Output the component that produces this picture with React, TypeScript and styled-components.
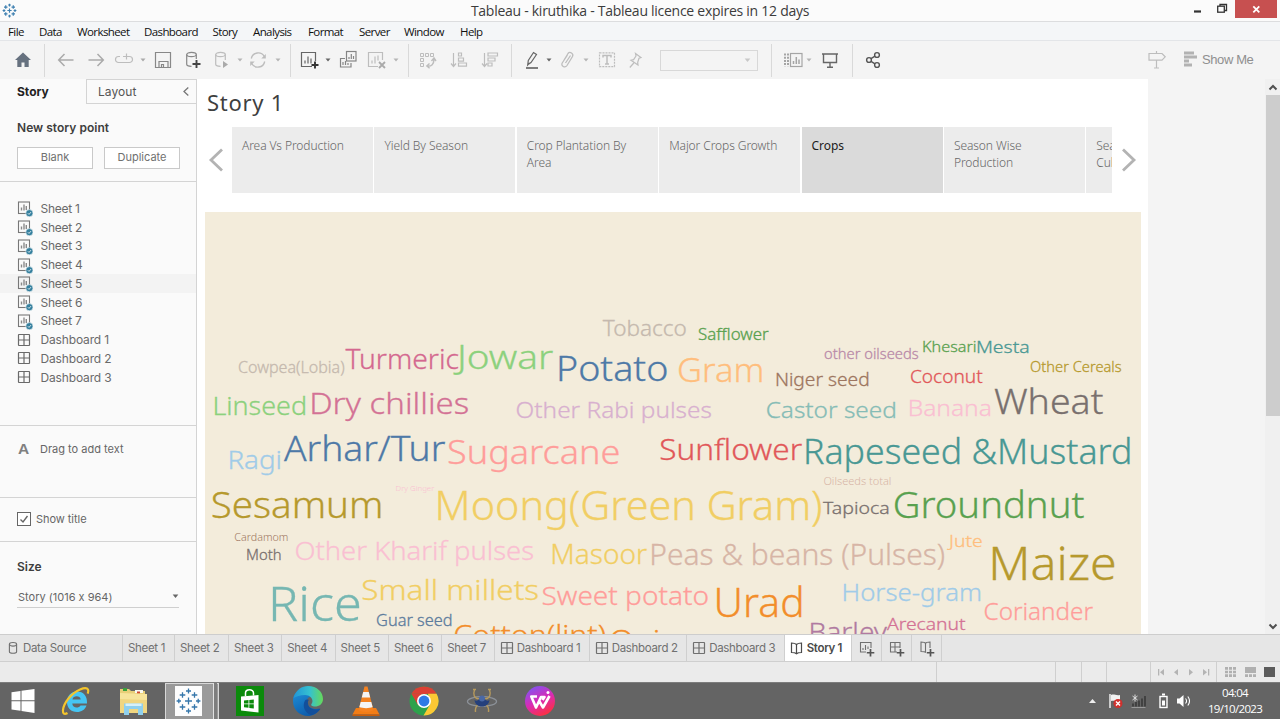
import React from "react";
import styled, { createGlobalStyle } from "styled-components";

const Global = createGlobalStyle`
  * { box-sizing: border-box; }
  html, body { margin: 0; padding: 0; overflow: hidden; }
  body { font-family: Inter, "Liberation Sans", sans-serif; font-feature-settings: "calt" 0; color: #555; }
  svg { display: block; flex: none; }
`;

const segoe = `"Open Sans", "Noto Sans", sans-serif`;
const book = `"Noto Sans", "Open Sans", sans-serif`;

const Window = styled.div`
  width: 1280px;
  height: 719px;
  display: flex;
  flex-direction: column;
  overflow: hidden;
  background: #fff;
`;

/* ---------- title bar and menus ---------- */
const TitleBar = styled.header`
  height: 22px;
  flex: none;
  display: grid;
  grid-template-columns: 95px 1fr 95px;
  background: #fbfbfb;
  border-bottom: 1px solid #dcdddf;
`;
const AppIcon = styled.div`
  padding: 3px 0 0 2px;
`;
const Title = styled.div`
  text-align: center;
  font: 14px/21px ${segoe};
  letter-spacing: -0.27px;
  color: #3c3c3c;
`;
const WindowButtons = styled.div`
  display: flex;
  align-items: flex-start;
`;
const Close = styled.div`
  width: 42px;
  height: 18px;
  margin-left: 5px;
  background: #c75050;
  display: flex;
  align-items: center;
  justify-content: center;
`;
const MenuBar = styled.nav`
  height: 19px;
  flex: none;
  display: flex;
  padding-left: 8px;
  background: #f4f6f8;
  border-bottom: 1px solid #e3e5e8;
`;
const MenuItem = styled.span<{ $w: number }>`
  width: ${(p) => p.$w}px;
  flex: none;
  font: 11.5px/19px ${segoe};
  letter-spacing: -0.6px;
  color: #101010;
  white-space: nowrap;
`;

/* ---------- toolbar ---------- */
const Toolbar = styled.div`
  height: 38px;
  flex: none;
  display: flex;
  align-items: center;
  background: #f4f4f4;
`;
const Tool = styled.div<{ $gap: number; $tone?: string }>`
  margin-left: ${(p) => p.$gap}px;
  flex: none;
  color: ${(p) => p.$tone ?? "#bdbdbd"};
`;
const Divider = styled.div<{ $gap: number }>`
  margin-left: ${(p) => p.$gap}px;
  width: 1px;
  height: 33px;
  background: #d9d9d9;
  flex: none;
`;
const Combo = styled.div`
  width: 98px;
  height: 21px;
  margin: 0 -1px 0 15px;
  padding-right: 6px;
  border: 1px solid #d8d8d8;
  display: flex;
  align-items: center;
  justify-content: flex-end;
  color: #c8c8c8;
`;
const ShowMe = styled.div`
  display: flex;
  align-items: center;
  gap: 4px;
  margin-left: 16px;
  padding-bottom: 2px;
  font: 13px "Liberation Sans", sans-serif;
  letter-spacing: -0.4px;
  color: #8f8f8f;
  white-space: nowrap;
`;

/* ---------- side panel ---------- */
const Body = styled.div`
  height: 555px;
  flex: none;
  display: flex;
`;
const Side = styled.aside`
  width: 197px;
  flex: none;
  border-right: 1px solid #d4d4d4;
  background: #fafafa;
  display: flex;
  flex-direction: column;
`;
const SideTabs = styled.div`
  height: 25px;
  display: flex;
`;
const ActiveTab = styled.div`
  width: 86px;
  padding-left: 17px;
  font-size: 12px;
  line-height: 25px;
  font-weight: 700;
  color: #222;
`;
const IdleTab = styled.div`
  flex: 1;
  display: flex;
  justify-content: space-between;
  align-items: center;
  padding: 0 7px 1px 11px;
  font-size: 12px;
  letter-spacing: 0.05px;
  color: #555;
  border: solid #d4d4d4;
  border-width: 1px 0 1px 1px;
`;
const Section = styled.section<{ $h: number; $pad?: string }>`
  height: ${(p) => p.$h}px;
  flex: none;
  padding: ${(p) => p.$pad ?? "0"};
  border-bottom: 1px solid #d4d4d4;
  &:last-child { border-bottom: 0; }
`;
const Heading = styled.h2`
  margin: 0;
  font-size: 12px;
  line-height: 16px;
  font-weight: 600;
  letter-spacing: 0.03px;
  color: #3e3e3e;
`;
const ButtonRow = styled.div`
  display: flex;
  gap: 11px;
  margin-top: 11px;
`;
const SideButton = styled.button`
  width: 76px;
  height: 22px;
  padding: 0 0 2px;
  border: 1px solid #c9c9c9;
  background: #fff;
  font: 11px Inter, sans-serif;
  color: #707070;
`;
const SheetRow = styled.div<{ $hover?: boolean; $ls?: number }>`
  height: 18.75px;
  display: flex;
  align-items: center;
  gap: 7.5px;
  padding-left: 17px;
  font-size: 12px;
  letter-spacing: ${(p) => p.$ls ?? -0.28}px;
  color: #6a6a6a;
  background: ${(p) => (p.$hover ? "#f3f3f3" : "transparent")};
`;
const RowIcon = styled.span`
  width: 16px;
  flex: none;
`;
const DragRow = styled.div`
  display: flex;
  align-items: center;
  font-size: 11px;
  color: #666;
`;
const LetterA = styled.span`
  width: 23px;
  padding-left: 1px;
  font: 700 15.5px "Liberation Sans", sans-serif;
  color: #808080;
`;
const CheckRow = styled.div`
  display: flex;
  align-items: center;
  gap: 5px;
  font-size: 11px;
  letter-spacing: -0.05px;
  color: #666;
`;
const SizePicker = styled.div`
  width: 162px;
  height: 22px;
  margin-top: 11px;
  padding: 0 0 0 1px;
  display: flex;
  justify-content: space-between;
  align-items: center;
  border-bottom: 1px solid #cfcfcf;
  font-size: 11px;
  color: #666;
`;

/* ---------- story ---------- */
const Story = styled.main`
  width: 951px;
  flex: none;
  background: #fff;
  padding: 10px 0 0 8px;
`;
const StoryTitle = styled.h1`
  margin: 0 0 0 2px;
  height: 28px;
  font: 400 22px/26px ${book};
  letter-spacing: 0.72px;
  color: #3f3f3f;
`;
const Navigator = styled.div`
  display: flex;
  align-items: center;
  height: 66px;
  margin: 10px 0 19px;
`;
const NavArrow = styled.div<{ $w: number; $left: number }>`
  width: ${(p) => p.$w}px;
  padding-left: ${(p) => p.$left}px;
  flex: none;
`;
const Points = styled.div`
  width: 880px;
  height: 66px;
  display: flex;
  gap: 1.4px;
  overflow: hidden;
`;
const Point = styled.div<{ $active?: boolean }>`
  width: 141px;
  flex: none;
  padding: 10px 10px 0;
  font: ${(p) => (p.$active ? 400 : 300)} 12px/17px ${book};
  letter-spacing: -0.08px;
  color: ${(p) => (p.$active ? "#1c1c1c" : "#666")};
  background: ${(p) => (p.$active ? "#dadada" : "#ececec")};
`;
const Viz = styled.div`
  width: 936px;
  height: 422px;
  background: #f3ecdb;
`;
const Gutter = styled.div`
  flex: 1;
  background: #f4f4f4;
`;
const ScrollBar = styled.div`
  width: 15px;
  flex: none;
  background: #f0f0f0;
  display: flex;
  flex-direction: column;
  align-items: center;
  justify-content: space-between;
  color: #505050;
`;
const Thumb = styled.div`
  width: 14px;
  height: 321px;
  background: #cdcdcd;
`;
const ThumbArea = styled.div`
  flex: 1;
`;
const ScrollEnd = styled.div`
  height: 16px;
  display: flex;
  align-items: center;
`;

/* ---------- sheet tabs and status ---------- */
const SheetTabs = styled.div`
  height: 28px;
  flex: none;
  display: flex;
  background: #e6e6e6;
  border-top: 1px solid #cdcdcd;
  border-bottom: 1px solid #cfcfcf;
`;
const SheetTab = styled.div<{ $w: number; $active?: boolean; $pad?: number; $gap?: number }>`
  width: ${(p) => p.$w}px;
  flex: none;
  display: flex;
  align-items: center;
  gap: ${(p) => p.$gap ?? 3}px;
  padding: 0 0 ${(p) => (p.$active ? 1 : 0)}px ${(p) => p.$pad ?? 5}px;
  border-right: 1px solid #cfcfcf;
  font-size: 11.5px;
  font-weight: ${(p) => (p.$active ? 600 : 400)};
  letter-spacing: -0.32px;
  white-space: nowrap;
  color: ${(p) => (p.$active ? "#4a4a4a" : "#707070")};
  background: ${(p) => (p.$active ? "#fff" : "transparent")};
`;
const Status = styled.div`
  height: 20px;
  flex: none;
  display: flex;
  background: #ebebeb;
`;
const StatusCell = styled.div<{ $w: number }>`
  width: ${(p) => p.$w}px;
  flex: none;
  display: flex;
  align-items: center;
  border-right: 1px solid #cfcfcf;
  &:last-child { border: 0; }
`;

/* ---------- taskbar ---------- */
const TaskBar = styled.footer`
  height: 37px;
  flex: none;
  display: flex;
  align-items: center;
  background: #646464;
  border-top: 1px solid #7c7c7c;
`;
const Task = styled.div<{ $w: number }>`
  width: ${(p) => p.$w}px;
  height: 36px;
  flex: none;
  display: flex;
  align-items: center;
  justify-content: center;
`;
const OpenTask = styled.div`
  width: 54px;
  height: 37px;
  flex: none;
  display: flex;
  align-items: center;
  background: #9a9a9a;
  border: 1px solid #d8d8d8;
  padding-left: 9px;
  gap: 11px;
`;
const StackEdge = styled.div`
  width: 4px;
  height: 36px;
  border: solid #e2e2e2;
  border-width: 0 0 0 1px;
  background: #7e7e7e;
`;
const Tray = styled.div`
  margin-left: auto;
  display: flex;
  align-items: center;
`;
const Clock = styled.div`
  width: 90px;
  text-align: center;
  font: 11.5px/16px ${segoe};
  letter-spacing: -0.68px;
  color: #fff;
`;

/* ---------- icons ---------- */
type IconProps = { children: React.ReactNode; w?: number; h?: number; sw?: number };
const Icon = ({ children, w = 20, h = 20, sw = 1.2 }: IconProps) => (
  <svg width={w} height={h} viewBox={`0 0 ${w} ${h}`} fill="none" stroke="currentColor" strokeWidth={sw}>
    {children}
  </svg>
);
const Caret = ({ s = 6 }: { s?: number }) => (
  <svg width={s} height={s / 2 + 1} viewBox="0 0 6 4"><path d="M0.5 0.5h5L3 3.5z" fill="currentColor" /></svg>
);
const GridIcon = () => (
  <Icon w={14} h={14}><rect x="1.5" y="1.5" width="11" height="11" rx="0.5" /><path d="M7 1.5v11M1.5 7h11" /></Icon>
);
const SheetIcon = () => (
  <svg width="16" height="18" viewBox="0 0 16 18" fill="none" stroke="#777">
    <rect x="1.5" y="3" width="11" height="11.5" strokeWidth="1.1" />
    <path d="M4.5 11.5V8.500M7 11.500V5.500M9.300 11V7" strokeWidth="1.400" stroke="#8a8a8a" />
    <circle cx="12.400" cy="14.200" r="3.600" fill="#35809e" stroke="#fafafa" strokeWidth="0.600" />
    <path d="M10.800 14.200l1.200 1.200 2-2.300" stroke="#e6f1f5" strokeWidth="0.900" />
  </svg>
);
const Cylinder = () => (
  <Icon w={10} h={14} sw={1.1}><ellipse cx="5" cy="3.300" rx="3.600" ry="1.800" /><path d="M1.400 3.300v7.400c0 2 7.200 2 7.200 0V3.300" /></Icon>
);
const BookIcon = () => (
  <Icon w={13} h={14}><path d="M6.500 3.500C5 2 3.500 2 1.500 2v9.500c2 0 3.500 0 5 1.300 1.500-1.300 3-1.300 5-1.300V2c-2 0-3.500 0-5 1.500v9" /></Icon>
);
const Plus = () => <path d="M12.500 9v7.500M8.800 12.750h7.500" strokeWidth="1.700" stroke="#555" />;
const crosses: [number, number, number][] = [
  [12, 12, 3.4], [12, 3.2, 2.2], [12, 20.8, 2.2], [3.2, 12, 2.2], [20.8, 12, 2.2],
  [6, 6.5, 2.8], [18, 6.5, 2.8], [6, 17.5, 2.8], [18, 17.5, 2.8],
];
const TableauMark = ({ size, sw = 1.4 }: { size: number; sw?: number }) => (
  <svg width={size} height={size} viewBox="0 0 24 24" stroke="#3d7fb0" strokeWidth={sw}>
    {crosses.map(([x, y, r]) => (
      <path key={`${x}-${y}`} d={`M${x - r} ${y}h${2 * r}M${x} ${y - r}v${2 * r}`} />
    ))}
  </svg>
);

/* ---------- word cloud: text, left, right, baseline, size, colour ---------- */
type Word = [string, number, number, number, number, string];
const words: Word[] = [
  ["Tobacco", 604, 686, 336.3, 21, "#c5b9ae"],
  ["Safflower", 699, 768, 340.3, 15.5, "#59a14f"],
  ["Turmeric", 347, 458, 369.3, 26.6, "#d4688f"],
  ["Jowar", 459, 552, 369.3, 33, "#8cd17d"],
  ["Cowpea(Lobia)", 239, 344, 373, 15.5, "#c5b9ae"],
  ["Potato", 558, 667, 381, 34, "#4e79a7"],
  ["Gram", 679, 763, 381.7, 33, "#ffbe7d"],
  ["other oilseeds", 825, 918, 359, 15, "#b98aa8"],
  ["Khesari", 923, 976, 352.3, 15, "#59a14f"],
  ["Mesta", 977, 1029, 353, 17.3, "#499894"],
  ["Other Cereals", 1031, 1121, 372.3, 14.8, "#b6992d"],
  ["Niger seed", 776, 869, 386, 18, "#9d7660"],
  ["Coconut", 911, 982, 383, 17.7, "#e15759"],
  ["Castor seed", 767, 896, 417.7, 22.5, "#86bcb6"],
  ["Banana", 909, 991, 416.3, 22.5, "#fabfd2"],
  ["Wheat", 996, 1102, 414, 34, "#79706e"],
  ["Linseed", 214, 306, 415, 26, "#8cd17d"],
  ["Dry chillies", 311, 468, 414, 29.5, "#d37295"],
  ["Other Rabi pulses", 517, 711, 418.3, 22.8, "#d8b0cf"],
  ["Ragi", 229, 281, 468.7, 25.5, "#a0cbe8"],
  ["Arhar/Tur", 286, 444, 460.7, 34, "#4e79a7"],
  ["Sugarcane", 449, 619, 464, 32.5, "#ff9d9a"],
  ["Sunflower", 661, 801, 460, 28.5, "#e15759"],
  ["Rapeseed &Mustard", 805, 1131, 464, 34, "#499894"],
  ["Sesamum", 213, 382, 518.3, 36.5, "#b6992d"],
  ["Dry Ginger", 396, 434, 490.7, 7.5, "#fabfd2"],
  ["Moong(Green Gram)", 437, 821, 519.7, 40, "#f1ce63"],
  ["Oilseeds total", 824, 891, 485, 10, "#d7b5a6"],
  ["Tapioca", 824, 889, 514, 17, "#79706e"],
  ["Groundnut", 895, 1083, 518, 36.5, "#59a14f"],
  ["Cardamom", 235, 288, 541.3, 10.5, "#9d7660"],
  ["Moth", 247, 281, 560, 15, "#79706e"],
  ["Other Kharif pulses", 296, 533, 560, 25.8, "#fabfd2"],
  ["Masoor", 552, 646, 564, 27.5, "#f1ce63"],
  ["Peas & beans (Pulses)", 651, 944, 564.7, 28.5, "#d7b5a6"],
  ["Jute", 950, 982, 547.3, 15.5, "#ffbe7d"],
  ["Maize", 991, 1115, 580.3, 45.5, "#b6992d"],
  ["Rice", 271, 360, 621.3, 48, "#76b7b2"],
  ["Small millets", 363, 538, 599.7, 27, "#f1ce63"],
  ["Sweet potato", 543, 708, 605, 25.5, "#ff9d9a"],
  ["Urad", 716, 803, 617.3, 39.5, "#f28e2b"],
  ["Horse-gram", 843, 981, 601, 24.3, "#a0cbe8"],
  ["Coriander", 985, 1092, 620, 23.8, "#ff9d9a"],
  ["Guar seed", 377, 452, 626.3, 15.7, "#5d7c9d"],
  ["Cotton(lint)", 455, 605, 645, 27, "#f28e2b"],
  ["Onion", 611, 697, 651, 30, "#f28e2b"],
  ["Barley", 810, 886, 640.5, 25.5, "#b07aa1"],
  ["Arecanut", 888, 965, 630, 17, "#d37295"],
];
const WordCloud = () => (
  <svg width="936" height="422" viewBox="205 212 936 422" fontFamily={book} fontWeight={300}>
    {words.map(([t, x1, x2, y, size, c]) => (
      <text
        key={t}
        x={x1 - size * 0.06}
        y={y}
        fontSize={size}
        fill={c}
        stroke={c}
        strokeWidth={size > 12 ? 0.3 : 0}
        textLength={x2 - x1 + size * 0.1}
        lengthAdjust="spacingAndGlyphs"
      >
        {t}
      </text>
    ))}
  </svg>
);

const menus: [string, number][] = [
  ["File", 31], ["Data", 38], ["Worksheet", 67], ["Dashboard", 68.5], ["Story", 40.5], ["Analysis", 55],
  ["Format", 51], ["Server", 45], ["Window", 56], ["Help", 30],
];
const dark = "#666";

export default function App() {
  return (
    <Window>
      <Global />
      <TitleBar>
        <AppIcon><TableauMark size={15} sw={1.9} /></AppIcon>
        <Title>Tableau - kiruthika - Tableau licence expires in 12 days</Title>
        <WindowButtons>
          <svg width="45" height="20" viewBox="0 0 45 20" fill="none" stroke="#333" strokeWidth="1.3">
            <path d="M9 11.500h7" strokeWidth="2.200" />
            <rect x="32.700" y="6.200" width="6.600" height="6" /><path d="M35 6V4.500h6.500v6h-2" />
          </svg>
          <Close>
            <svg width="9" height="9" viewBox="0 0 9 9" stroke="#fff" strokeWidth="1.800"><path d="M1.300 1.300l6 6M7.300 1.300l-6 6" /></svg>
          </Close>
        </WindowButtons>
      </TitleBar>
      <MenuBar>{menus.map(([m, w]) => <MenuItem key={m} $w={w}>{m}</MenuItem>)}</MenuBar>

      <Toolbar>
        <Tool $gap={13} $tone="#66717f"><Icon><path d="M10 2.500l8 7.500h-2.300v7h-4.200v-4.500h-3V17H4.300v-7H2z" fill="currentColor" stroke="none" /></Icon></Tool>
        <Divider $gap={11} />
        <Tool $gap={11} $tone="#aaa"><Icon sw={1.500}><path d="M17.500 10H3M8.500 4L2.700 10l5.800 6" /></Icon></Tool>
        <Tool $gap={10} $tone="#aaa"><Icon sw={1.500}><path d="M2.500 10H17M11.500 4l5.800 6-5.800 6" /></Icon></Tool>
        <Tool $gap={8}><Icon><path d="M6 6.500H4.500a3 3 0 0 0 0 6h11a3 3 0 0 0 0-6H9M12.500 3.500v6" /></Icon></Tool>
        <Tool $gap={6} $tone="#aaa"><Caret /></Tool>
        <Tool $gap={7} $tone="#888"><Icon><path d="M2.500 2.500h15v15h-15zM6 17.500v-6h9v6M8.500 17.500v-3h2v3" /></Icon></Tool>
        <Tool $gap={10} $tone="#888"><Icon><ellipse cx="8.500" cy="4.500" rx="4.800" ry="2.200" /><path d="M3.700 4.500v9.800c0 1.500 2.500 2 4.800 2M13.300 4.500V9" /><path d="M13.500 10v8M9.500 14h8" stroke="#444" strokeWidth="1.900" /></Icon></Tool>
        <Tool $gap={9}><Icon><ellipse cx="8.500" cy="4.500" rx="4.800" ry="2.200" /><path d="M3.700 4.500v9.800c0 1.500 2.500 2 4.800 2M13.300 4.500V10" /><path d="M11 11l5 3.500-5 3.500z" fill="#aaa" stroke="none" /></Icon></Tool>
        <Tool $gap={5} $tone="#b5b5b5"><Caret /></Tool>
        <Tool $gap={5}><Icon sw={1.400}><path d="M3.300 8.500a7 7 0 0 1 13-2M16.700 11.500a7 7 0 0 1-13 2" /><path d="M17.800 4v4.500h-4.500zM2.200 16v-4.500h4.500z" fill="currentColor" stroke="none" /></Icon></Tool>
        <Tool $gap={7} $tone="#b5b5b5"><Caret /></Tool>
        <Divider $gap={9} />
        <Tool $gap={9} $tone={dark}><Icon><path d="M12 16.500H1.500v-14h14V11M5 13.500v-3M8 13.500v-7M11 13.500v-5" /><path d="M15 11.500v7M11.500 15h7" stroke="#333" strokeWidth="1.900" /></Icon></Tool>
        <Tool $gap={5} $tone={dark}><Caret /></Tool>
        <Tool $gap={7} $tone="#858585"><Icon><rect x="8.500" y="1.500" width="9.500" height="9.500" /><path d="M11 9V7M13.300 9V4M15.500 9V6M7 8.500H2.500v8.500h10.500v-4M5 15v-3M7.500 15v-4M10 15v-2" /></Icon></Tool>
        <Tool $gap={9}><Icon><path d="M11 16.500H1.500v-14h14V10M5 13.500v-3M8 13.500v-7M11 10.500v-5" /><path d="M12 12l6 6M18 12l-6 6" strokeWidth="1.800" stroke="#aaa" /></Icon></Tool>
        <Tool $gap={6} $tone="#b5b5b5"><Caret /></Tool>
        <Divider $gap={9} />
        <Tool $gap={9}><Icon sw={1}><path d="M2.500 3.500h3v3h-3zM7.500 3.500h3v3h-3zM12.500 3.500h3v3h-3zM2.500 8.500h3v3h-3zM2.500 13.500h3v3h-3z" /><path d="M9 16c4.500.8 7-2 7-7M11.500 13.500L8.800 16l2.800 2.300M13.500 11l2.500-3 2 3" strokeWidth="1.400" /></Icon></Tool>
        <Tool $gap={11}><Icon><path d="M4.500 3v13M2 13.500l2.500 3 2.500-3M9.500 3h3v3h-3zM9.500 8h5v3.200h-5zM9.500 13h8v3.200h-8z" /></Icon></Tool>
        <Tool $gap={11}><Icon><path d="M4.500 3v13M2 13.500l2.500 3 2.500-3M8 3h9.500v3H8zM8 8h7v3H8zM8 13h4v3H8z" /></Icon></Tool>
        <Divider $gap={11} />
        <Tool $gap={10} $tone="#666"><Icon><path d="M7.500 13L5.700 15l.6-4.500L11.500 2.500l3 2L9 12.500l-3 2" /><path d="M4 18h12" stroke="#777" strokeWidth="1.900" /></Icon></Tool>
        <Tool $gap={4} $tone={dark}><Caret /></Tool>
        <Tool $gap={5}><Icon sw={1.300}><path d="M6.500 11l4.500-7.500c1.800-2.500 6 0 4.500 3l-5.500 9c-2 3-6.500.5-4.800-2.500l5.300-8M8.500 13l5-7.500" /></Icon></Tool>
        <Tool $gap={6} $tone="#b5b5b5"><Caret /></Tool>
        <Tool $gap={8}><Icon><rect x="2.500" y="2.800" width="15" height="13.800" strokeDasharray="2 1" /><path d="M6 7.500v-2h8v2M10 5.500v8.500M8 14h4" strokeWidth="1.500" /></Icon></Tool>
        <Tool $gap={8}><Icon><path d="M10.500 3.500l5.500 4-2 .8-1.300 4 .3 2.700L6 10.300l2.600-.6L11 6zM8.800 13l-4 4.500" /></Icon></Tool>
        <Combo><Caret s={7} /></Combo>
        <Divider $gap={14} />
        <Tool $gap={11} $tone="#a5a5a5"><Icon><rect x="7.500" y="3.500" width="11.500" height="13" /><path d="M10.500 14v-3M13.300 14V7M16 14V9.500" strokeWidth="1.500" /><path d="M2 3.500v13M5 3.500v13" strokeWidth="2" strokeDasharray="2 1.200" /></Icon></Tool>
        <Tool $gap={3} $tone="#b5b5b5"><Caret /></Tool>
        <Tool $gap={8} $tone={dark}><Icon><path d="M2 4h16M3.500 4v8.500h13V4M10 12.500V17M7 17.300h6" strokeWidth="1.400" /></Icon></Tool>
        <Divider $gap={12} />
        <Tool $gap={11} $tone="#555"><Icon sw={1.400}><circle cx="5" cy="10" r="2.400" /><circle cx="13" cy="5" r="2.400" /><circle cx="13" cy="15" r="2.400" /><path d="M7 8.700l4-2.500M7 11.300l4 2.500" /></Icon></Tool>
        <Tool $gap={263}><Icon><path d="M2 3.500h13l3.200 3.300-3.200 3.400H2zM9.500 1v2.500M9.500 10.200V18M7 18h5" /></Icon></Tool>
        <ShowMe>
          <svg width="15" height="16" viewBox="0 0 15 16" stroke="#b2b2b2" strokeWidth="2.800"><path d="M1 2h10M1 6h13M1 10h5M1 14h8" /></svg>
          Show Me
        </ShowMe>
      </Toolbar>

      <Body>
        <Side>
          <SideTabs>
            <ActiveTab>Story</ActiveTab>
            <IdleTab>Layout
              <svg width="6" height="9" viewBox="0 0 6 9" fill="none" stroke="#777" strokeWidth="1.300"><path d="M5.300 0.500L1 4.500l4.300 4" /></svg>
            </IdleTab>
          </SideTabs>
          <Section $h={78} $pad="16px 0 0 17px">
            <Heading>New story point</Heading>
            <ButtonRow><SideButton>Blank</SideButton><SideButton>Duplicate</SideButton></ButtonRow>
          </Section>
          <Section $h={244} $pad="17px 0 0">
            {[1, 2, 3, 4, 5, 6, 7].map((n) => (
              <SheetRow key={n} $hover={n === 5}><RowIcon><SheetIcon /></RowIcon>Sheet {n}</SheetRow>
            ))}
            {[1, 2, 3].map((n) => (
              <SheetRow key={n} $ls={-0.15}><RowIcon><GridIcon /></RowIcon>Dashboard {n}</SheetRow>
            ))}
          </Section>
          <Section $h={72} $pad="14px 0 0 17px"><DragRow><LetterA>A</LetterA>Drag to add text</DragRow></Section>
          <Section $h={44} $pad="14px 0 0 17px">
            <CheckRow>
              <svg width="14" height="14" viewBox="0 0 14 14" fill="none" stroke="#666" strokeWidth="1"><rect x="0.500" y="0.500" width="13" height="13" fill="#fff" /><path d="M3.500 7.500l2.500 2.500 4.500-6" strokeWidth="1.400" /></svg>
              Show title
            </CheckRow>
          </Section>
          <Section $h={92} $pad="17px 0 0 17px">
            <Heading>Size</Heading>
            <SizePicker>Story (1016 x 964)<Caret s={7} /></SizePicker>
          </Section>
        </Side>
        <Story>
          <StoryTitle>Story 1</StoryTitle>
          <Navigator>
            <NavArrow $w={27} $left={3}>
              <svg width="16" height="24" viewBox="0 0 16 24" fill="none" stroke="#b3b3b3" strokeWidth="2.800"><path d="M14 1.500L3 12l11 10.500" /></svg>
            </NavArrow>
            <Points>
              <Point>Area Vs Production</Point>
              <Point>Yield By Season</Point>
              <Point>Crop Plantation By Area</Point>
              <Point>Major Crops Growth</Point>
              <Point $active>Crops</Point>
              <Point>Season Wise Production</Point>
              <Point>Season Wise Cultivation</Point>
            </Points>
            <NavArrow $w={30} $left={9}>
              <svg width="16" height="24" viewBox="0 0 16 24" fill="none" stroke="#b3b3b3" strokeWidth="2.800"><path d="M2 1.500L13 12 2 22.500" /></svg>
            </NavArrow>
          </Navigator>
          <Viz><WordCloud /></Viz>
        </Story>
        <Gutter />
        <ScrollBar>
          <ScrollEnd><svg width="10" height="7" viewBox="0 0 10 7" fill="none" stroke="currentColor" strokeWidth="2"><path d="M1.500 5.500L5 2l3.500 3.500" /></svg></ScrollEnd>
          <ThumbArea><Thumb /></ThumbArea>
          <ScrollEnd><svg width="10" height="7" viewBox="0 0 10 7" fill="none" stroke="currentColor" strokeWidth="2"><path d="M1.500 1.500L5 5l3.500-3.500" /></svg></ScrollEnd>
        </ScrollBar>
      </Body>

      <SheetTabs>
        <SheetTab $w={123} $pad={8} $gap={5}><Cylinder />Data Source</SheetTab>
        <SheetTab $w={52}>Sheet 1</SheetTab>
        {[2, 3, 4, 5, 6, 7].map((n) => <SheetTab key={n} $w={n === 2 ? 54 : n === 7 ? 52.5 : 53.3}>Sheet {n}</SheetTab>)}
        <SheetTab $w={95}><GridIcon />Dashboard 1</SheetTab>
        <SheetTab $w={97.5}><GridIcon />Dashboard 2</SheetTab>
        <SheetTab $w={97.5}><GridIcon />Dashboard 3</SheetTab>
        <SheetTab $w={67} $active $gap={4}><BookIcon />Story 1</SheetTab>
        <SheetTab $w={30} $pad={6}><Icon w={17} h={17} sw={1.100}><path d="M8 12H2.500V2.500H13V8M5 10V8M7.500 10V5M10 9V6.500" /><Plus /></Icon></SheetTab>
        <SheetTab $w={30} $pad={6}><Icon w={17} h={17} sw={1.100}><path d="M9 12H2.500V2.500h9.500V8M7 2.500V12M2.500 7H12" /><Plus /></Icon></SheetTab>
        <SheetTab $w={30} $pad={6}><Icon w={17} h={17} sw={1.100}><path d="M8 12.500c-1-1-3-1-5-1V2c2 0 4 0 4.500 1.500C8 2 10 2 12 2v6M7.500 3.500v9" /><Plus /></Icon></SheetTab>
      </SheetTabs>
      <Status>
        <StatusCell $w={937} /><StatusCell $w={119} /><StatusCell $w={25.5} /><StatusCell $w={25.5} /><StatusCell $w={44} />
        <StatusCell $w={66}>
          <svg width="65" height="12" viewBox="0 0 65 12" fill="#b4b4b4"><path d="M7 3h1.300v6.500H7zM13 3v6.500L9 6.200zM27 3v6.500L23 6.200zM38 3v6.500l4-3.300zM52 3v6.500l4-3.300zM57 3h1.300v6.500H57z" /></svg>
        </StatusCell>
        <StatusCell $w={62}>
          <svg width="62" height="14" viewBox="0 0 62 14" fill="#b0b0b0">
            <path d="M8 2h3v2.700H8zM12 2h3v2.700h-3zM16 2h3v2.700h-3zM8 5.700h3v2.600H8zM12 5.700h3v2.600h-3zM16 5.700h3v2.600h-3zM8 9.300h3V12H8zM12 9.300h3V12h-3zM16 9.300h3V12h-3zM28 2h11v6H28zM28 9.300h3V12h-3zM32 9.300h3V12h-3zM36 9.300h3V12h-3z" />
            <path d="M47 2h11v10H47z" fill="#5c5c5c" />
          </svg>
        </StatusCell>
      </Status>

      <TaskBar>
        <Task $w={45}>
          <svg width="26" height="26" viewBox="0 0 26 26" fill="#fff"><path d="M1.500 4.300L10.500 3v9.300h-9zM11.500 2.800L24.500 1v11.300h-13zM1.500 13.300h9v9.400l-9-1.300zM11.500 13.300h13V25l-13-1.900z" /></svg>
        </Task>
        <Task $w={61}>
          <svg width="32" height="32" viewBox="0 0 32 32" fill="none">
            <path d="M17 6.500c-6 0-10 4.500-10 10.500S11 27 17 27c4.500 0 8-2.200 9.500-6.500h-6c-2 3.500-8.200 2.500-8.200-2H27C27.500 11 23.500 6.500 17 6.500zM12.500 14.500c.3-4.300 8-4.300 8.200 0z" fill="#46c5f3" fillRule="evenodd" />
            <path d="M7.500 28C1 32 1.500 22 8.500 13.500S26 1 28 4.500c.6 1.300.4 2.500-.3 4.200" stroke="#f5c52c" strokeWidth="2.200" />
          </svg>
        </Task>
        <Task $w={56}>
          <svg width="32" height="32" viewBox="0 0 32 32">
            <path d="M2 4h9l2 2h14v5H2z" fill="#e8cf78" /><path d="M5 3h4v3H5z" fill="#3aa03c" /><path d="M17 5h8v3h-8z" fill="#f8f8f0" /><path d="M19 6.500h3v2h-3z" fill="#d04a32" />
            <path d="M2 8l27 1v19H2z" fill="#f7e49b" /><path d="M2 14l27 1v13H2z" fill="#f0d680" />
            <path d="M6 30V18.500h19V30h-5v-6h-9v6z" fill="#8fd0ee" /><path d="M7.500 18.500h16v2.500h-16z" fill="#d6f0fa" />
          </svg>
        </Task>
        <Task $w={3} />
        <OpenTask>
          <svg width="27" height="30" viewBox="0 0 27 30">
            <rect width="27" height="30" fill="#fdfdfd" />
            <g stroke="#3576aa" strokeWidth="1.300">
              {([[13.5, 15, 3.5], [13.5, 5, 2.5], [13.5, 25, 2.5], [3.8, 15, 2.2], [23.2, 15, 2.2], [7.5, 9, 2.8], [19.5, 9, 2.8], [7.5, 21, 2.8], [19.5, 21, 2.8]] as [number, number, number][]).map(([x, y, r]) => (
                <path key={`${x}-${y}`} d={`M${x - r} ${y}h${2 * r}M${x} ${y - r}v${2 * r}`} />
              ))}
            </g>
          </svg>
          <StackEdge />
        </OpenTask>
        <Task $w={62}>
          <svg width="28" height="30" viewBox="0 0 28 30">
            <rect width="28" height="30" fill="#0b8a0b" /><path d="M5 10.500L22.500 9v17.500L5 24.500z" fill="#fff" />
            <path d="M9.500 10V7c0-4 8-4.500 8 0v2.500" stroke="#fff" fill="none" strokeWidth="1.500" />
            <path d="M8 14.500l4.500-.4v3.400H8zM13.300 14l4.500-.5v4h-4.500zM8 18.300h4.500v3.500L8 21.300zM13.300 18.300h4.500v4.300l-4.500-.7z" fill="#0b8a0b" />
          </svg>
        </Task>
        <Task $w={53}>
          <svg width="32" height="32" viewBox="0 0 32 32">
            <defs>
              <linearGradient id="edgeTop" x1="0" x2="1"><stop offset="0" stopColor="#2196d8" /><stop offset="0.550" stopColor="#35c1d0" /><stop offset="1" stopColor="#66d95a" /></linearGradient>
              <linearGradient id="edgeLow" x1="0" y1="0" x2="0.500" y2="1"><stop offset="0" stopColor="#2093dc" /><stop offset="1" stopColor="#0d5cab" /></linearGradient>
            </defs>
            <path d="M1 16C1 7 8 4 13 5c5 1 7 4 7 7-3-1-6 2-5 6 1 5 7 7 13 5.500C25 29 20.500 31 16 31 7.500 31 1 24.500 1 16z" fill="url(#edgeLow)" />
            <path d="M1.500 13C4 4.500 10 1 16 1c9 0 15 6 15 13 0 5-4 7.500-8 7.500-3 0-4.500-1.200-3.500-2.500 3-4-1-9-6.500-9-5 0-9 1.500-11.500 3z" fill="url(#edgeTop)" />
            <path d="M13 15.500c-3 5-.5 12.500 6 14.500 4-.5 8-3.500 9.500-6.300-5 2.300-12 .3-12.500-5.200-.2-1.500 0-2.500.8-3.500-1.300-.8-3-.5-3.800.5z" fill="#124f9b" />
          </svg>
        </Task>
        <Task $w={63}>
          <svg width="28" height="32" viewBox="0 0 28 32">
            <path d="M4 23h20l3.500 6.500H.5z" fill="#f27d16" /><path d="M.5 29.500h27v1.500H.5z" fill="#c85c08" />
            <path d="M12.500 1.500h3L21.500 25c-3 2.500-12 2.500-15 0z" fill="#f58220" />
            <path d="M11.200 7h5.600l1.400 5.500h-8.400zM8.700 17h10.600l1.300 5c-3 1.500-10 1.500-13.200 0z" fill="#f4f4f4" />
          </svg>
        </Task>
        <Task $w={54}>
          <svg width="32" height="32" viewBox="0 0 32 32">
            <circle cx="16" cy="16" r="14.500" fill="#2da24c" />
            <path d="M3.400 8.800A14.500 14.500 0 0 1 28.600 8.800L16 9z" fill="#dc4034" />
            <path d="M3.400 8.800L10 20l4-11L28.600 8.800z" fill="#dc4034" />
            <path d="M28.600 8.800A14.500 14.500 0 0 1 15.500 30.500L22.300 19 20 8.800z" fill="#fcc934" />
            <circle cx="16" cy="16" r="7" fill="#fff" /><circle cx="16" cy="16" r="5.400" fill="#2f7ae5" />
          </svg>
        </Task>
        <Task $w={61}>
          <svg width="32" height="28" viewBox="0 0 32 28" fill="none">
            <ellipse cx="16" cy="14.500" rx="14.500" ry="4.800" stroke="#8c9198" strokeWidth="1.300" />
            <path d="M7 2.500h3M25 2.500h-3M8.500 3c-2 5 0 8.500 4.500 9M23.500 3c2 5 0 8.500-4.500 9M12 18c-1.500 1-3 3-2.500 7M20 18c1.500 1 3 3 2.500 7" stroke="#b79a5c" strokeWidth="1.400" />
            <path d="M8.500 13c2 1.500 3.500.5 4.500-1h6c1 1.500 2.500 2.500 4.500 1-.5 4.500-4 6.500-7.500 6.500S9 17.500 8.500 13z" fill="#25407c" /><circle cx="16" cy="11.500" r="3" fill="#4a68a6" />
          </svg>
        </Task>
        <Task $w={56}>
          <svg width="32" height="32" viewBox="0 0 32 32" fill="none">
            <defs><linearGradient id="wps" x1="0.200" y1="0" x2="0.700" y2="1"><stop offset="0" stopColor="#7d55f5" /><stop offset="0.500" stopColor="#d92bb5" /><stop offset="1" stopColor="#ff3038" /></linearGradient></defs>
            <circle cx="16" cy="16" r="15" fill="url(#wps)" />
            <path d="M13 11.500H7.300L12 22.500 17 12h3.500L18.500 15M15.500 16.500l3.500 6L25.500 11" stroke="#fff" strokeWidth="2.600" strokeLinejoin="round" />
            <circle cx="24" cy="7.500" r="1.500" fill="#fff" />
          </svg>
        </Task>
        <Tray>
          <svg width="104" height="24" viewBox="0 0 104 24" fill="none">
            <path d="M3 14l3.500-4 3.500 4z" fill="#eee" />
            <path d="M24 5v14" stroke="#eee" strokeWidth="1.500" /><path d="M25 6c3-1.500 5 1 9 0v6c-4 1-6-1-9 0z" fill="#f2f2f2" />
            <circle cx="32" cy="14.500" r="4.500" fill="#d0302c" /><path d="M30 12.500l4 4M34 12.500l-4 4" stroke="#fff" strokeWidth="1.400" />
            <path d="M47 17.500v-3M50 17.500V13M53 17.500v-6M56 17.500V9.500M59 17.500V7" stroke="#3c3c3c" strokeWidth="1.700" /><path d="M45.500 18.500h14" stroke="#999" />
            <path d="M46.500 7l5 4M51.500 7l-5 4M49 5.500v7" stroke="#ddd" />
            <rect x="74" y="7.500" width="7" height="11" stroke="#fff" strokeWidth="1.400" /><path d="M76 5.500h3" stroke="#fff" strokeWidth="2" /><path d="M76 11.500h3v5h-3z" fill="#fff" />
            <path d="M91 9.500h2.500L97.500 6v12l-4-3.500H91z" fill="#fff" /><path d="M99.500 9.500c1.300 1.500 1.300 3.500 0 5M101.800 7.500c2.300 3 2.300 6 0 9" stroke="#fff" strokeWidth="1.100" />
          </svg>
          <Clock>04:04<br />19/10/2023</Clock>
        </Tray>
      </TaskBar>
    </Window>
  );
}
